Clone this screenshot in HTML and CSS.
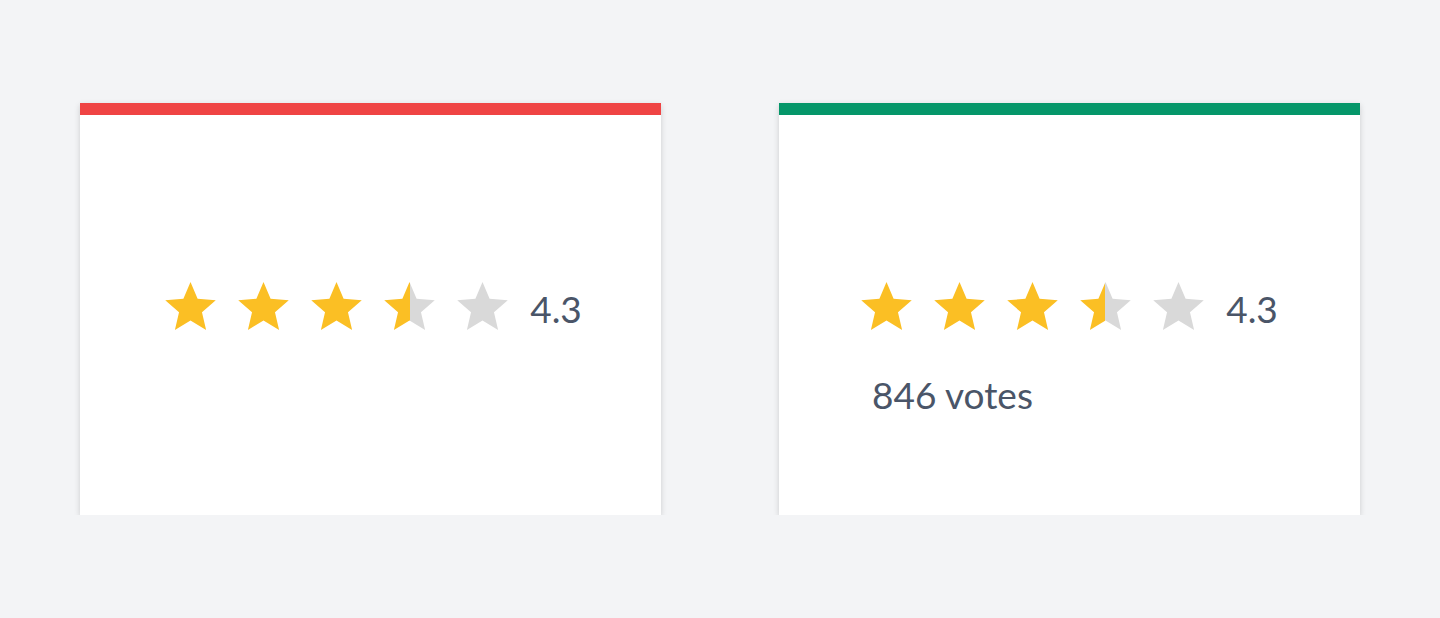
FILE: index.html
```html
<!DOCTYPE html>
<html lang="en">
<head>
    <meta charset="UTF-8">
    <title>Rating cards</title>
    <link rel="stylesheet" href="styles.css">
</head>
<body>
    <svg width="0" height="0" class="defs">
        <defs>
            <linearGradient id="half">
                <stop offset="50%" stop-color="#fbbf24"/>
                <stop offset="50%" stop-color="#d9d9d9"/>
            </linearGradient>
        </defs>
    </svg>

    <div class="cards">
        <div class="card card-red">
            <div class="rating">
                <svg class="star" viewBox="2 2 20 19"><polygon class="full" points="12 17.27 18.18 21 16.54 13.97 22 9.24 14.81 8.63 12 2 9.19 8.63 2 9.24 7.46 13.97 5.82 21"/></svg>
                <svg class="star" viewBox="2 2 20 19"><polygon class="full" points="12 17.27 18.18 21 16.54 13.97 22 9.24 14.81 8.63 12 2 9.19 8.63 2 9.24 7.46 13.97 5.82 21"/></svg>
                <svg class="star" viewBox="2 2 20 19"><polygon class="full" points="12 17.27 18.18 21 16.54 13.97 22 9.24 14.81 8.63 12 2 9.19 8.63 2 9.24 7.46 13.97 5.82 21"/></svg>
                <svg class="star" viewBox="2 2 20 19"><polygon fill="url(#half)" points="12 17.27 18.18 21 16.54 13.97 22 9.24 14.81 8.63 12 2 9.19 8.63 2 9.24 7.46 13.97 5.82 21"/></svg>
                <svg class="star" viewBox="2 2 20 19"><polygon class="empty" points="12 17.27 18.18 21 16.54 13.97 22 9.24 14.81 8.63 12 2 9.19 8.63 2 9.24 7.46 13.97 5.82 21"/></svg>
                <span class="score">4.3</span>
            </div>
        </div>

        <div class="card card-green">
            <div class="rating">
                <svg class="star" viewBox="2 2 20 19"><polygon class="full" points="12 17.27 18.18 21 16.54 13.97 22 9.24 14.81 8.63 12 2 9.19 8.63 2 9.24 7.46 13.97 5.82 21"/></svg>
                <svg class="star" viewBox="2 2 20 19"><polygon class="full" points="12 17.27 18.18 21 16.54 13.97 22 9.24 14.81 8.63 12 2 9.19 8.63 2 9.24 7.46 13.97 5.82 21"/></svg>
                <svg class="star" viewBox="2 2 20 19"><polygon class="full" points="12 17.27 18.18 21 16.54 13.97 22 9.24 14.81 8.63 12 2 9.19 8.63 2 9.24 7.46 13.97 5.82 21"/></svg>
                <svg class="star" viewBox="2 2 20 19"><polygon fill="url(#half)" points="12 17.27 18.18 21 16.54 13.97 22 9.24 14.81 8.63 12 2 9.19 8.63 2 9.24 7.46 13.97 5.82 21"/></svg>
                <svg class="star" viewBox="2 2 20 19"><polygon class="empty" points="12 17.27 18.18 21 16.54 13.97 22 9.24 14.81 8.63 12 2 9.19 8.63 2 9.24 7.46 13.97 5.82 21"/></svg>
                <span class="score">4.3</span>
            </div>
            <div class="votes">846 votes</div>
        </div>
    </div>
</body>
</html>
```

FILE: styles.css
```css
body {
    margin: 0;
    background-color: #f3f4f6;
    font-family: Lato, "Open Sans", sans-serif;
    color: #4a5568;
}
.defs {
    position: absolute;
}
.cards {
    display: flex;
    gap: 118px;
    padding: 103px 80px 0;
}
.card {
    width: 581px;
    height: 412px;
    box-sizing: border-box;
    background-color: white;
    border-top: 12px solid;
    box-shadow: 0 2px 6px rgba(0, 0, 0, 0.16);
    display: flex;
    flex-direction: column;
    align-items: center;
    padding-top: 167px;
}
.card-red {
    border-top-color: #ef4444;
    padding-left: 6px;
}
.card-green {
    border-top-color: #059669;
}
.rating {
    display: flex;
    align-items: center;
    gap: 22px;
    height: 48px;
}
.star {
    width: 51px;
    height: 48px;
    display: block;
}
.full {
    fill: #fbbf24;
}
.empty {
    fill: #d9d9d9;
}
.score {
    font-size: 37px;
    line-height: 1;
    padding-top: 5px;
}
.votes {
    align-self: flex-start;
    margin: 46px 0 0 93px;
    font-size: 37px;
    line-height: 1;
}
```
